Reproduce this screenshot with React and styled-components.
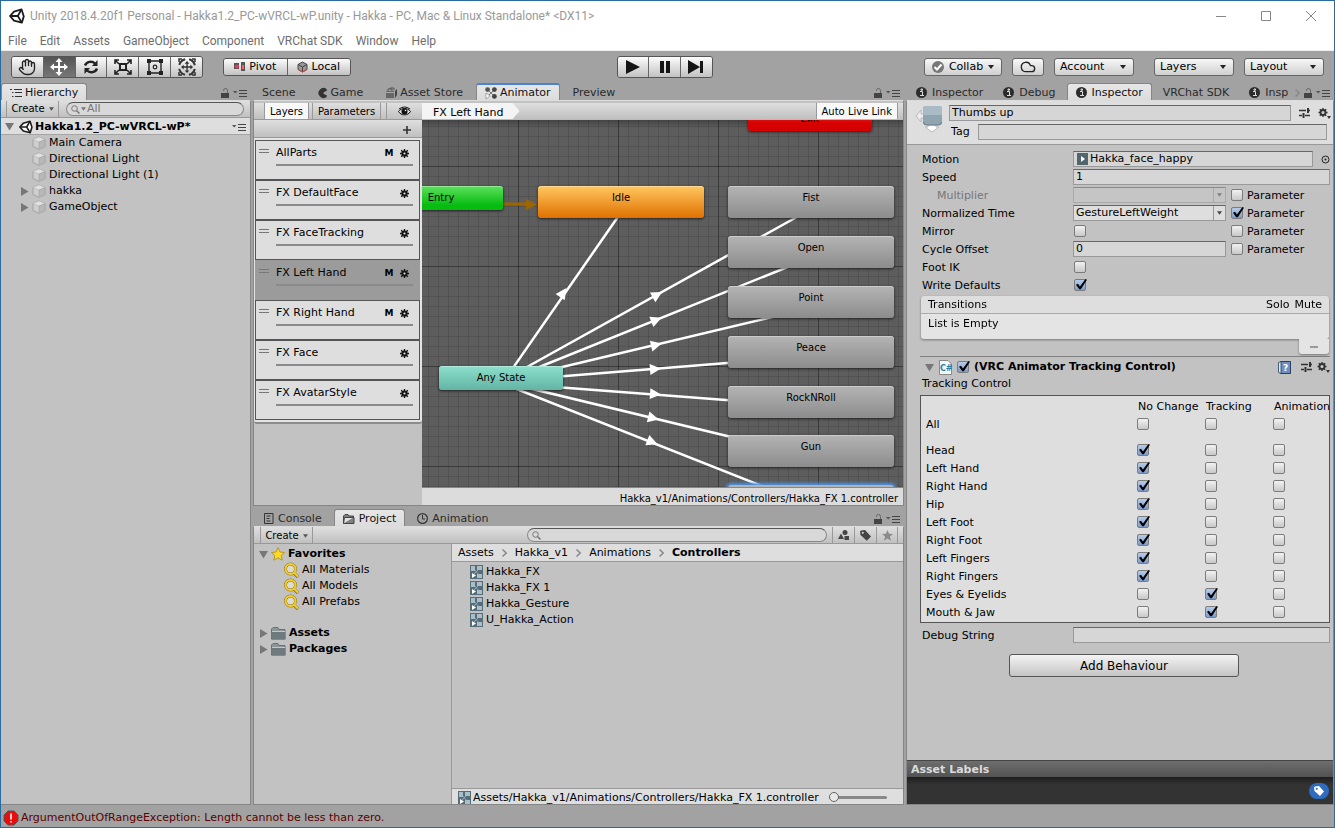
import React from "react";
import styled, { createGlobalStyle, css } from "styled-components";
import { Hand, Cloud } from "lucide-react";

const ui = '"DejaVu Sans", Verdana, sans-serif';
const win = 'Roboto, "Noto Sans", sans-serif';

const Global = createGlobalStyle`
  *, *::before, *::after { box-sizing: border-box; }
  html, body { margin: 0; background: #a2a2a2; }
  body { font: 11px/16px ${ui}; color: #000; }
  button, input, select { font: inherit; color: inherit; margin: 0; padding: 0; border: 0; background: none; border-radius: 0; outline: none; }
  a { color: inherit; text-decoration: none; }
  svg { display: block; flex: none; overflow: visible; }
`;

const bar = "linear-gradient(#dfdfdf, #c0c0c0)";

const Window = styled.div`
  display: flex;
  flex-direction: column;
  min-height: 100vh;
  border: 1px solid #2a6a9e;
  background: #a2a2a2;
  white-space: nowrap;
`;

/* ---------- window chrome ---------- */
const TitleBar = styled.header`
  display: flex;
  align-items: center;
  height: 30px;
  padding: 0 14px 0 8px;
  gap: 5px;
  background: #fff;
  color: #999;
  font: 12px/16px ${win};
`;
const Title = styled.span`flex: 1;`;
const WindowButtons = styled.div`display: flex; gap: 30px; margin-right: 2px;`;
const WindowButton = styled.button`width: 15px; height: 15px; display: grid; place-items: center;`;
const MenuBar = styled.nav`
  display: flex;
  gap: 13px;
  height: 20px;
  padding: 0 7px;
  background: #fff;
  color: #6d6d6d;
  font: 12px/20px ${win};
  border-bottom: 1px solid #eee;
`;
const MenuItem = styled.button``;

/* ---------- top toolbar ---------- */
const Toolbar = styled.div`
  display: grid;
  grid-template-columns: 1fr auto 1fr;
  align-items: center;
  height: 32px;
  padding: 0 10px;
`;
const ToolGroup = styled.div`
  display: flex;
  align-items: center;
  gap: ${(p) => p.$gap || 0}px;
  justify-content: ${(p) => (p.$end ? "flex-end" : "flex-start")};
`;
const Segments = styled.div`
  display: flex;
  width: ${(p) => p.$w}px;
  height: ${(p) => p.$h || 22}px;
  border: 1px solid #555;
  border-radius: 3px;
  overflow: hidden;
`;
const PlaySegments = styled(Segments)`margin-right: 6px;`;
const Segment = styled.button`
  display: flex;
  flex: 1;
  align-items: center;
  justify-content: center;
  gap: 3px;
  background: ${(p) => (p.$on ? "linear-gradient(#555, #777)" : "linear-gradient(#fcfcfc, #c2c2c2)")};
  & + & { border-left: 1px solid #666; }
`;
const pill = css`
  height: 18px;
  border: 1px solid #666;
  border-radius: 3px;
  background: linear-gradient(#f8f8f8, #cfcfcf);
`;
const PillButton = styled.button`
  ${pill}
  display: flex;
  align-items: center;
  justify-content: ${(p) => (p.$center ? "center" : "space-between")};
  width: ${(p) => p.$w}px;
  padding: 0 7px 0 ${(p) => p.$pl || 7}px;
  gap: 4px;
`;
const PillSelectBox = styled.label`
  ${pill}
  position: relative;
  display: flex;
  width: 80px;
  & > svg { position: absolute; right: 7px; top: 6px; pointer-events: none; }
`;
const PillSelect = styled.select`appearance: none; width: 100%; padding-left: 5px; cursor: pointer;`;
const Spacer = styled.span`width: ${(p) => p.$w ?? 10}px; flex: none;`;

/* ---------- docking ---------- */
const Docks = styled.main`display: flex; flex: 1; gap: 2px; min-height: 0;`;
const Dock = styled.section`
  display: flex;
  flex-direction: column;
  min-width: 0;
  min-height: 0;
  flex: ${(p) => p.$flex || "none"};
  width: ${(p) => (p.$w ? p.$w + "px" : "auto")};
`;
const Tabs = styled.div`
  display: flex;
  height: ${(p) => p.$h || 17}px;
  padding-top: ${(p) => (p.$h ? 3 : 0)}px;
  padding-left: ${(p) => p.$pl || 0}px;
  gap: ${(p) => p.$gap || 0}px;
`;
const Tab = styled.button`
  display: flex;
  align-items: center;
  gap: ${(p) => p.$gap || 3}px;
  flex: ${(p) => (p.$clip ? "0 1 auto" : "none")};
  padding: 1px ${(p) => (p.$clip ? 0 : 8)}px 0 8px;
  min-width: 0;
  overflow: hidden;
  color: #2a2a2a;
  border: 1px solid transparent;
  border-bottom: 0;
  border-radius: 3px 3px 0 0;
  ${(p) => p.$on && css`
    background: linear-gradient(#e6e6e6, #dcdcdc);
    border-color: #858585;
    color: #111;
  `}
  ${(p) => p.$focus && css`border-top: 2px solid #4a83d6;`}
`;
const TabTools = styled.div`
  display: flex;
  align-items: center;
  gap: 4px;
  margin-left: auto;
  padding: 3px 4px 0 4px;
`;
const Panel = styled.div`
  display: flex;
  flex-direction: column;
  flex: 1;
  min-height: 0;
  background: #c2c2c2;
  border: 1px solid #868686;
  border-top: 1px solid #dcdcdc;
  ${(p) => p.$flush && "border-left: 0;"}
`;
const PanelBar = styled.div`
  display: flex;
  align-items: stretch;
  height: 17px;
  background: ${bar};
  border-bottom: 1px solid ${(p) => p.$line || "#999"};
  font-size: 10px;
  line-height: 16px;
`;
const BarButton = styled.button`
  display: flex;
  align-items: center;
  justify-content: center;
  gap: 4px;
  padding: ${(p) => p.$pt || 0}px 5px 0;
  border: solid #999;
  border-width: 0 ${(p) => (p.$open ? 0 : 1)}px 0 1px;
  ${(p) => p.$w && css`width: ${p.$w}px;`}
  ${(p) => p.$on && css`background: #f8f8f8;`}
`;
const SearchBox = styled.label`
  display: flex;
  align-items: center;
  gap: 1px;
  width: ${(p) => p.$w}px;
  flex: ${(p) => (p.$grow ? 1 : "none")};
  height: 14px;
  margin: 1px 0;
  padding: 0 6px 0 4px;
  border: 1px solid #888;
  border-top-color: #555;
  border-radius: 7px;
  background: #d8d8d8;
  color: #777;
  font-size: 11px;
`;
const SearchInput = styled.input`flex: 1; min-width: 0; height: 12px; line-height: 12px; &::placeholder { color: #777; opacity: 1; }`;

/* ---------- trees ---------- */
const SceneRow = styled.div`
  display: flex;
  align-items: center;
  height: 17px;
  padding: 1px 4px 0;
  gap: 2px;
  background: #dedede;
  border-bottom: 1px solid #a5a5a5;
  font-weight: bold;
`;
const Grow = styled.span`flex: 1;`;
const Tree = styled.ul`list-style: none; margin: 0; padding: ${(p) => p.$pt || 0}px 0 0;`;
const TreeRow = styled.li`
  display: flex;
  align-items: center;
  height: 16px;
  gap: 3px;
  padding-left: ${(p) => p.$pl || 0}px;
  font-weight: ${(p) => (p.$bold ? "bold" : "normal")};
  margin-top: ${(p) => p.$mt || 0}px;
`;
const FoldSlot = styled.span`width: 10px; display: flex; justify-content: center;`;

/* ---------- animator ---------- */
const AnimatorBody = styled.div`display: flex; min-height: 0; padding-top: 2px;`;
const LayerColumn = styled.div`width: 168px; flex: none;`;
const LayerBar = styled.div`
  display: flex;
  align-items: center;
  justify-content: flex-end;
  height: 18px;
  padding: 2px 11px 0 0;
  background: ${bar};
  border-bottom: 1px solid #999;
`;
const LayerList = styled.ul`
  list-style: none;
  margin: 0;
  padding: 2px 2px 2px 1px;
  background: #e4e4e4;
  border-bottom: 2px solid #8c8c8c;
  border-radius: 0 0 3px 3px;
`;
const Layer = styled.li`
  display: grid;
  grid-template-columns: 17px 1fr 14px 17px;
  grid-template-rows: 22px 2px;
  align-items: center;
  justify-items: start;
  height: 40px;
  padding: 1px 6px 0 3px;
  background: ${(p) => (p.$on ? "#9b9b9b" : "#dedede")};
  border: 1px solid ${(p) => (p.$on ? "#9b9b9b" : "#555")};
  & > b, & > svg { justify-self: center; }
`;
const Grip = styled.i`width: 10px; height: 4px; margin-top: -4px; border: solid #777; border-width: 1px 0;`;
const Mask = styled.b`font-size: 9px;`;
const Weight = styled.i`grid-column: 2 / 5; justify-self: stretch; height: 2px; background: #8a8a8a;`;

const GraphColumn = styled.div`display: flex; flex-direction: column; flex: 1; min-width: 0;`;
const Crumb = styled.button`
  padding: 2px 16px 0 11px;
  margin-right: auto;
  font-size: 11px;
  background: #f4f4f4;
  clip-path: polygon(0 0, calc(100% - 7px) 0, 100% 50%, calc(100% - 7px) 100%, 0 100%);
`;
const Canvas = styled.div`
  position: relative;
  overflow: hidden;
  height: 367px;
  background:
    linear-gradient(#0004, #0000 8px),
    linear-gradient(90deg, #0000004d 1px, #0000 1px) 96px 0 / 100px 100%,
    linear-gradient(#0000004d 1px, #0000 1px) 0 46px / 100% 100px,
    linear-gradient(90deg, #0000001c 1px, #0000 1px) 6px 0 / 10px 100%,
    linear-gradient(#0000001c 1px, #0000 1px) 0 6px / 100% 10px,
    #5d5d5d;
`;
const Edges = styled.svg`position: absolute; left: 0; top: 0;`;
const fills = {
  gray: "linear-gradient(#b4b4b4, #8c8c8c)",
  green: "linear-gradient(#5ee05e, #06bc10 80%)",
  orange: "linear-gradient(#ffc860, #e07000)",
  teal: "linear-gradient(#8ce0cc, #62b4a4)",
  red: "linear-gradient(#f04040, #d60000 70%)",
};
const Node = styled.div`
  position: absolute;
  left: ${(p) => p.$x}px;
  top: ${(p) => p.$y}px;
  width: ${(p) => (p.$small ? 124 : 166)}px;
  height: ${(p) => (p.$small ? 24 : 32)}px;
  padding-top: 4px;
  border-radius: 3px;
  text-align: center;
  font-size: 10px;
  background: ${(p) => fills[p.$tone || "gray"]};
  box-shadow: ${(p) => (p.$selected ? "0 0 3px 2px #4a90e0" : "0 1px 3px #000a, inset 0 1px #fff5")};
`;
const GraphFooter = styled.div`
  height: 18px;
  padding-right: 5px;
  text-align: right;
  font-size: 10px;
  line-height: 21px;
  border-top: 1px solid #888;
  background: #dcdcdc;
`;

/* ---------- project ---------- */
const ProjectBody = styled.div`display: flex; flex: 1; min-height: 0;`;
const Folders = styled.div`width: 198px; border-right: 1px solid #999;`;
const Files = styled.div`display: flex; flex-direction: column; flex: 1; min-width: 0;`;
const Breadcrumbs = styled.nav`
  display: flex;
  align-items: center;
  gap: 8px;
  height: 18px;
  padding: 1px 0 0 6px;
  background: #dedede;
  border-bottom: 1px solid #999;
`;
const PathBar = styled.div`
  display: flex;
  align-items: center;
  gap: 2px;
  height: 16px;
  margin-top: auto;
  padding: 2px 16px 0 6px;
  background: #dedede;
  border-top: 1px solid #999;
  overflow: hidden;
`;
const PathText = styled.span`width: 357px; overflow: hidden; line-height: 14px;`;
const Zoom = styled.input`
  appearance: none;
  width: 58px;
  height: 10px;
  &::-webkit-slider-runnable-track { height: 3px; background: #888; border-radius: 2px; }
  &::-webkit-slider-thumb { appearance: none; width: 10px; height: 10px; margin-top: -4px; border: 1px solid #666; border-radius: 50%; background: #e8e8e8; }
`;

/* ---------- inspector ---------- */
const StateHeader = styled.div`
  display: flex;
  gap: 6px;
  height: 44px;
  padding: 4px 2px 0 8px;
  background: #dedede;
  border-bottom: 1px solid #999;
`;
const HeaderFields = styled.div`display: grid; flex: 1; align-content: start; gap: 3px;`;
const HeaderLine = styled.div`
  display: flex;
  align-items: center;
  height: 16px;
  gap: 8px;
  padding: ${(p) => (p.$tag ? "0 4px 0 2px" : 0)};
`;
const field = css`
  height: 16px;
  background: #d6d6d6;
  border: 1px solid #999;
  border-top-color: #666;
`;
const TextField = styled.input`
  ${field}
  flex: ${(p) => (p.$w ? "none" : 1)};
  width: ${(p) => (p.$w ? p.$w + "px" : "auto")};
  min-width: 0;
  padding: 0 2px;
`;
const ObjectBox = styled.span`
  ${field}
  display: flex;
  align-items: center;
  flex: 1;
  padding-left: 3px;
  gap: 2px;
`;
const ObjectInput = styled.input`flex: 1; min-width: 0; height: 14px;`;
const SelectBox = styled.span`
  ${field}
  display: flex;
  position: relative;
  width: 153px;
  opacity: ${(p) => (p.$off ? 0.6 : 1)};
  background: ${(p) => (p.$off ? "#c8c8c8" : "#dedede")};
  &::before { content: ""; position: absolute; right: 11px; top: 0; bottom: 0; border-left: 1px solid #999; }
  & > svg { position: absolute; right: 3px; top: 5px; pointer-events: none; }
`;
const FieldSelect = styled.select`appearance: none; width: 100%; height: 14px; line-height: 14px; padding-left: 2px;`;
const Check = styled.input`
  appearance: none;
  position: relative;
  display: block;
  width: 12px;
  height: 12px;
  flex: none;
  margin-left: ${(p) => (p.$ml || 0)}px;
  border: 1px solid #7c7c7c;
  border-radius: 2px;
  background: linear-gradient(#f2f2f2, #c8c8c8);
  &:checked { background: linear-gradient(#b6cbe8, #7c9ccc); }
  &:checked::after {
    content: "";
    position: absolute;
    left: 1px;
    top: -1px;
    width: 11px;
    height: 11px;
    background: #000;
    clip-path: polygon(0 52%, 18% 44%, 36% 68%, 86% 0, 100% 6%, 44% 94%, 30% 94%);
  }
`;
const Form = styled.div`
  display: flex;
  flex-direction: column;
  padding: ${(p) => p.$pt || 0}px 3px 0 15px;
`;
const FormRow = styled.div`
  display: grid;
  grid-template-columns: 151px 1fr;
  align-items: center;
  height: 18px;
`;
const FieldLabel = styled.label`
  padding: 2px 0 0 ${(p) => (p.$indent ? 15 : 0)}px;
  color: ${(p) => (p.$off ? "#777" : "inherit")};
`;
const Control = styled.div`display: flex; align-items: center; gap: 4px; min-width: 0;`;
const ParamLabel = styled.label`display: flex; align-items: center; gap: 4px; margin-left: auto; width: 99px;`;
const ParamText = styled.span`padding-top: 1px;`;
const ListBox = styled.div`margin: 2px 4px 0 14px; filter: drop-shadow(0 1px 1px #0006);`;
const ListHead = styled.div`
  display: flex;
  gap: 5px;
  height: 18px;
  padding: 1px 7px 0 7px;
  background: #dedede;
  border-bottom: 1px solid #aaa;
  border-radius: 3px 3px 0 0;
`;
const ListEmpty = styled.div`height: 25px; padding: 2px 7px; background: #e4e4e4; border-radius: 0 0 3px 3px;`;
const ListRemove = styled.button`
  display: grid;
  place-items: center;
  width: 30px;
  height: 15px;
  margin-left: auto;
  background: #e4e4e4;
  border-radius: 0 0 3px 3px;
`;
const ComponentHead = styled.div`
  display: flex;
  align-items: center;
  gap: 5px;
  height: 20px;
  margin: 2px 3px 0 13px;
  padding: 1px 0 0 5px;
  border-top: 1px solid #808080;
  font-weight: bold;
`;
const TrackingLabel = styled.div`padding-left: 15px; height: 19px; line-height: 15px;`;
const TrackingBox = styled.div`margin: 0 3px 3px 13px; padding: 1px 0; background: #dedede; border: 1px solid #555;`;
const TrackingTable = styled.table`
  width: 100%;
  table-layout: fixed;
  border-collapse: collapse;
  th, td { height: 18px; padding: 0 8px 0 0; font-weight: normal; text-align: left; overflow: hidden; }
  th { padding-top: 2px; }
  th:first-child { padding-left: 5px; }
  thead th { padding-left: 1px; }
  th:last-child { overflow: visible; }
  tbody tr:first-child > * { height: 26px; padding-bottom: 8px; }
`;
const Col = styled.col`width: ${(p) => p.$w}px;`;
const AddButton = styled.button`
  align-self: center;
  width: 230px;
  height: 23px;
  margin: 10px 4px 0 0;
  border: 1px solid #555;
  border-radius: 3px;
  background: linear-gradient(#f4f4f4, #c4c4c4);
  font-size: 12px;
`;
const AssetHead = styled.div`
  margin-top: auto;
  height: 17px;
  padding: 1px 0 0 4px;
  background: linear-gradient(#6e6e6e, #525252);
  border-top: 1px solid #444;
  color: #dcdcdc;
  font-weight: bold;
`;
const AssetBody = styled.div`
  display: flex;
  align-items: center;
  justify-content: flex-end;
  height: 27px;
  padding-right: 4px;
  background: linear-gradient(#1e1e1e, #333 8px);
`;
const Status = styled.footer`
  display: flex;
  align-items: center;
  gap: 2px;
  height: 22px;
  padding: 4px 2px 0;
  color: #5c0000;
`;

/* ---------- icons ---------- */
const Svg = ({ w = 12, h, vb, children, ...r }) => (
  <svg width={w} height={h || w} viewBox={vb || `0 0 ${w} ${h || w}`} fill="none" aria-hidden="true" {...r}>{children}</svg>
);
const UnityLogo = ({ s = 15 }) => (
  <Svg w={s} vb="0 0 16 16" stroke="#1c1c1c" strokeWidth="1.800" strokeLinejoin="round">
    <path d="M1 8 5 3.600 12.600 1.400 14.800 8.400 12.800 14.600 5 12.600Z" fill="#fff" />
    <path d="M1 8H8.800M8.800 8 12.400 1.600M8.800 8 12.600 14.400" />
  </Svg>
);
const MoveIcon = ({ s = 18, c = "#fff" }) => (
  <Svg w={s} vb="0 0 18 18" fill={c}>
    <path d="M9 0 12.500 4H10v4h4V5.500L18 9 14 12.500V10H10v4h2.500L9 18 5.500 14H8V10H4v2.500L0 9 4 5.500V8H8V4H5.500Z" />
  </Svg>
);
const RotateIcon = () => (
  <Svg w={16} stroke="#222" strokeWidth="2.400">
    <path d="M2 6.500C3.500 2.500 9 1.500 12 4.500M14 9.500C12.500 13.500 7 14.500 4 11.500" />
    <path d="M14.500 1v6H9ZM1.500 15V9H7Z" fill="#222" stroke="none" />
  </Svg>
);
const ScaleIcon = () => (
  <Svg w={18} h={16} stroke="#222" strokeWidth="1.600">
    <path d="M6 5h6v6H6Z" strokeWidth="2" />
    <path d="M1 5V1h4M13 1h4v4M17 11v4h-4M5 15H1v-4M1 1l4 4M17 1l-4 4M17 15l-4-4M1 15l4-4" />
  </Svg>
);
const RectIcon = () => (
  <Svg w={18} h={16} stroke="#222">
    <path d="M3 2h12v12H3Z" strokeWidth="1.400" />
    <circle cx="9" cy="8" r="1.800" strokeWidth="1.200" />
    <path d="M1 0h4v4H1ZM13 0h4v4h-4ZM1 12h4v4H1ZM13 12h4v4h-4Z" fill="#222" stroke="none" />
  </Svg>
);
const TransformIcon = () => (
  <Svg w={18} stroke="#333" strokeWidth="2">
    <circle cx="9" cy="9" r="8" strokeDasharray="8.500 4.066" strokeDashoffset="-2" />
    <path d="M1 4V1h3M14 1h3v3M17 14v3h-3M4 17H1v-3" strokeWidth="1.500" />
    <g transform="translate(3 3) scale(.67)"><path stroke="none" fill="#333" d="M9 0 12.500 4H10v4h4V5.500L18 9 14 12.500V10H10v4h2.500L9 18 5.500 14H8V10H4v2.500L0 9 4 5.500V8H8V4H5.500Z" /></g>
  </Svg>
);
const PivotIcon = () => (
  <Svg w={12} h={10}>
    <rect x="0" y="1" width="5" height="6" fill="#555" /><circle cx="3" cy="4.500" r="2" fill="#e0405a" />
    <rect x="7" y="0" width="4" height="9" fill="#555" /><rect x="8" y="3" width="2" height="4" fill="#e66" />
  </Svg>
);
const LocalIcon = () => (
  <Svg w={11} h={12} stroke="#444">
    <path d="M1 3.500 5.500 1 10 3.500V8.500L5.500 11 1 8.500Z" fill="#999" /><path d="M1 3.500 5.500 6 10 3.500M5.500 6v5" /><path d="M1 8.500 5.500 11 10 8.500" stroke="#d44" />
  </Svg>
);
const PlayIcon = () => <Svg w={14} h={14} fill="#151515"><path d="M0 0 14 7 0 14Z" /></Svg>;
const PauseIcon = () => <Svg w={10} h={12} fill="#151515"><path d="M0 0h4v12H0ZM6 0h4v12H6Z" /></Svg>;
const StepIcon = () => <Svg w={16} h={14} fill="#151515"><path d="M0 0 12 7 0 14ZM12 1h3v12h-3Z" /></Svg>;
const CollabIcon = () => (
  <Svg w={12}><circle cx="6" cy="6" r="6" fill="#777" /><path d="M2.500 6 5 8.500 9.500 3.500" stroke="#fff" strokeWidth="2" /></Svg>
);
const Down = ({ c = "#222", w = 6 }) => <Svg w={w} h={4} vb="0 0 6 4" fill={c}><path d="M0 0h6L3 4Z" /></Svg>;
const Info = () => (
  <Svg w={11}><circle cx="5.500" cy="5.500" r="5.500" fill="#2c2c2c" /><path d="M4 4.500h2.500v4M4 8.500h4M5 2h1.500v1.200H5Z" stroke="#ddd" strokeWidth="1" /></Svg>
);
const Lock = () => (
  <Svg w={8} h={10}><rect y="5" width="8" height="5" fill="#444" /><path d="M2.500 3V2.500a2 2 0 0 1 4 0V5" stroke="#666" /></Svg>
);
const PaneMenu = () => <Svg w={14} h={8}><path d="M0 2h4.500L2.200 4.500Z" fill="#555" /><path d="M6 1.500h8M6 4.500h8M6 7.500h8" stroke="#444" /></Svg>;
const ListIcon = () => (
  <Svg w={12} h={10} stroke="#333"><path d="M4 1.500h8M5 4.500h7M5 8.500h7" strokeWidth="1.200" /><path d="M0 1.500h2M2 4.500h1.500M2 8.500h1.500" /></Svg>
);
const GameIcon = () => <Svg w={10} fill="#333"><path d="M8.500 1A5 5 0 1 0 8.500 9L9 7.500 5.500 5.800V4.500L9 2.500Z" /></Svg>;
const StoreIcon = () => (
  <Svg w={12} h={11}><path d="M1 4h8v7H1Z" fill="#666" /><path d="M10 4l2-2v6l-2 3Z" fill="#444" /><path d="M3 4V2h4v2M5 2V1h4v2" stroke="#555" /><path d="M1 5.500h8" stroke="#aaa" /></Svg>
);
const AnimatorIcon = () => (
  <Svg w={12}>
    <path d="M3 3l6 6M9 3 3 9" stroke="#777" /><circle cx="2.600" cy="2.600" r="2.400" fill="#555" /><circle cx="9.400" cy="2.600" r="2.400" fill="#444" /><circle cx="9.400" cy="9.400" r="2.400" fill="#444" />
    <path d="M1 6v6l4-3Z" fill="#fff" stroke="#777" strokeWidth=".6" />
  </Svg>
);
const Eye = () => (
  <Svg w={13} h={9}><path d="M.5 4.500C3 .5 10 .5 12.500 4.500 10 9 3 9 .5 4.500Z" stroke="#111" fill="#ddd" /><circle cx="6.500" cy="4.500" r="3" fill="#111" /><circle cx="7.500" cy="3.500" r=".8" fill="#fff" /><path d="M1 2Q6.500-2 12 2" stroke="#111" /></Svg>
);
const Plus = () => <Svg w={8} stroke="#333" strokeWidth="1.600"><path d="M4 0v8M0 4h8" /></Svg>;
const Gear = ({ s = 9, c = "#151515" }) => (
  <Svg w={s} vb="0 0 9 9" stroke={c}>
    <path d="M4.500 0v9M0 4.500h9M1.200 1.200l6.600 6.600M7.800 1.200 1.200 7.800" strokeWidth="1.400" />
    <circle cx="4.500" cy="4.500" r="2.100" strokeWidth="2" fill="#dedede" />
  </Svg>
);
const GearMenu = () => (
  <Svg w={13} h={11} stroke="#333">
    <path d="M5 0v9M.5 4.500h9M1.800 1.300l6.400 6.400M8.200 1.300 1.800 7.700" strokeWidth="1.400" />
    <circle cx="5" cy="4.500" r="2.500" strokeWidth="1.900" fill="#d0d0d0" />
    <path d="M9 8h4l-2 3Z" fill="#333" stroke="none" />
  </Svg>
);
const Sliders = () => <Svg w={11} h={10} stroke="#333" strokeWidth="1.500"><path d="M0 2.500h7M10 2.500h1M0 7.500h3M6 7.500h5" /><path d="M9 0v5M4.500 5v5" strokeWidth="2" /></Svg>;
const CubeIcon = () => (
  <Svg w={14} h={14} stroke="#999" strokeWidth=".8" strokeLinejoin="round"><path d="M1 3.500 7 .8 13 3.500V10.500L7 13.400 1 10.500Z" fill="#cfcfcf" /><path d="M1 3.500 7 6.200 13 3.500 7 .8Z" fill="#e0e0e0" stroke="#bbb" /><path d="M7 6.200V13.400L13 10.500V3.500Z" fill="#b8b8b8" stroke="#aaa" /></Svg>
);
const Fold = ({ open }) => (
  <Svg w={9} h={9} fill="#777">{open ? <path d="M0 1h9L4.500 8.500Z" /> : <path d="M1 0v9l7.500-4.500Z" />}</Svg>
);
const Lens = () => <Svg w={9} stroke="#777"><circle cx="3.500" cy="3.500" r="2.800" /><path d="M5.500 5.500 8.500 8.500" strokeWidth="1.500" /></Svg>;
const ConsoleIcon = () => <Svg w={10} h={11} stroke="#333"><path d="M.5.500h8.500v10H.5ZM2.500 3h4M2.500 5.500h3M2.500 8h4" /></Svg>;
const ProjectIcon = () => <Svg w={12} h={10}><path d="M.5 9.500V2L2 .5h3L6 2h4.500v1.500M.5 9.500h10.500V3.500H1.500Z" fill="#808080" stroke="#444" /></Svg>;
const Clock = () => <Svg w={11} stroke="#333"><circle cx="5.500" cy="5.500" r="4.900" strokeWidth="1.200" /><path d="M5.500 2v4H8" /></Svg>;
const StarIcon = () => (
  <Svg w={14} h={14} vb="0 0 14 14"><path d="M7 .6 9 5l4.500.5L10.200 8.500 11.200 13.200 7 10.800 2.800 13.200 3.800 8.500.5 5.500 5 5Z" fill="#ffd92a" stroke="#a98b14" strokeWidth=".8" /></Svg>
);
const SearchFav = () => (
  <Svg w={15} h={15}><circle cx="6.500" cy="6" r="5" stroke="#8a7a30" strokeWidth="3" fill="#dcdcd4" /><path d="M10 10l4 4" stroke="#8a7a30" strokeWidth="3.400" /><circle cx="6.500" cy="6" r="5" stroke="#f5cf28" strokeWidth="2" /><path d="M10 9.500l4 4" stroke="#f5cf28" strokeWidth="2.200" /></Svg>
);
const Folder = () => (
  <Svg w={15} h={13}><path d="M.5 12V2L2 .5h5L8 2.500h6V12Z" fill="#8c9698" stroke="#697274" /><path d="M.5 5H14.500V12.500H.5Z" fill="#6e7a7d" /><path d="M1 4.500h13" stroke="#c0c8ca" /></Svg>
);
const ControllerIcon = () => (
  <Svg w={13} h={14}><rect width="13" height="14" fill="#566d78" /><path d="M4 4l5 6M9 4 4 9" stroke="#90a6b0" /><path d="M1 1h4v5H1ZM7 1h5v4H7ZM7 9h5v4H7Z" fill="#a9bec8" /><path d="M2 8v5l4-2.500Z" fill="#fff" /></Svg>
);
const Chevron = () => <Svg w={5} h={8} stroke="#888" strokeWidth="1.500"><path d="M.5.500 4.200 4 .5 7.500" /></Svg>;
const Shapes = () => <Svg w={11} h={10} fill="#444"><path d="M0 9 3 3.500 6 9Z" /><circle cx="7" cy="2.500" r="2.500" /><path d="M6.500 6H11v4H6.500Z" /></Svg>;
const TagIcon = ({ c = "#444" }) => <Svg w={11} fill={c}><path fillRule="evenodd" d="M0 1.500 1 .5 5 0l6 6.500L6.800 10.800.5 5ZM2.800 1.800a1 1 0 1 0 .01 0Z" /></Svg>;
const StarGray = () => <Svg w={11} fill="#8a8a8a"><path d="M5.500 0 7 3.800l4 .2-3.100 2.600L9 10.800 5.500 8.500 2 10.800 3.100 6.600 0 4l4-.2Z" /></Svg>;
const StateIcon = () => (
  <Svg w={28} h={28}>
    <path d="M6 5v4h3v4H6v4L1 11Z" stroke="#bbb" fill="#eee" /><path d="M13 20h8v2h3l-7 5-7-5h3Z" fill="#fff" stroke="#bbb" />
    <rect x="8" y="1" width="19" height="19" rx="3" fill="#8fa5b0" /><path d="M8 4a3 3 0 0 1 3-3h13a3 3 0 0 1 3 3v6H8Z" fill="#a9bcc6" /><path d="M8.500 17a3 3 0 0 0 3 3h12a3 3 0 0 0 3-3" stroke="#657b86" />
  </Svg>
);
const ClipIcon = () => <Svg w={11} h={12}><rect width="11" height="12" fill="#51656e" /><path d="M4 3v6l4-3Z" fill="#fff" /></Svg>;
const Picker = () => <Svg w={9}><circle cx="4.500" cy="4.500" r="3.500" stroke="#222" /><circle cx="4.500" cy="4.500" r="1" fill="#222" /></Svg>;
const Minus = () => <Svg w={8} h={2} fill="#999"><path d="M0 0h8v2H0Z" /></Svg>;
const ScriptIcon = () => (
  <Svg w={13} h={15}><path d="M.5.500H9L12.500 4v10.500H.5Z" fill="#f4f6f8" stroke="#888" /><text x="1" y="11" fontSize="8" fontWeight="bold" fill="#1683ad">C#</text></Svg>
);
const HelpBook = () => (
  <Svg w={13} h={13}><path d="M2.500.500h10v12h-10Z" fill="#6f8fc0" stroke="#263e63" /><path d="M.5 1.500 3 .5v12l-2.500-1Z" fill="#dfe6ee" stroke="#263e63" strokeWidth=".8" /><text x="5" y="10" fontSize="9" fill="#fff">?</text></Svg>
);
const LabelBadge = () => (
  <Svg w={20} h={16}><rect width="20" height="16" rx="8" fill="#2f6bc0" /><g transform="translate(5 3)"><path fillRule="evenodd" fill="#fff" d="M0 1.500 1 .5 5 0l5 5.500L6 10 .5 5ZM2.800 1.800a1 1 0 1 0 .01 0Z" /></g></Svg>
);
const ErrorIcon = () => (
  <Svg w={16}><path d="M5 1h6l4 4v6l-4 4H5L1 11V5Z" fill="#e80c0c" stroke="#555" /><path d="M7.200 3.500h1.600v6H7.200ZM7.200 11h1.600v1.600H7.200Z" fill="#fff" /></Svg>
);

/* ---------- data ---------- */
const menus = ["File", "Edit", "Assets", "GameObject", "Component", "VRChat SDK", "Window", "Help"];
const tools = [
  ["Hand", <Hand size={18} strokeWidth={1.800} color="#222" />], ["Move", <MoveIcon />], ["Rotate", <RotateIcon />],
  ["Scale", <ScaleIcon />], ["Rect", <RectIcon />], ["Transform", <TransformIcon />],
];
const objects = [["Main Camera"], ["Directional Light"], ["Directional Light (1)"], ["hakka", true], ["GameObject", true]];
const layers = [
  ["AllParts", true], ["FX DefaultFace"], ["FX FaceTracking"], ["FX Left Hand", true], ["FX Right Hand", true], ["FX Face"], ["FX AvatarStyle"],
];
const states = [["Fist", 66], ["Open", 116], ["Point", 166], ["Peace", 216], ["RockNRoll", 266], ["Gun", 315]];
/* each edge: start, end, arrow position */
const edges = [
  [84, 258, 200, 91, 141, 173], [87, 257, 391, 88, 235, 175], [90, 258, 383, 140, 234, 200], [94, 258, 376, 191, 234, 225],
  [94, 260, 330, 241, 233, 249], [94, 264, 330, 282, 233, 274], [73, 260, 330, 322, 231, 298], [72, 260, 350, 370, 230, 322],
];
const body = [
  ["All"], ["Head", 0], ["Left Hand", 0], ["Right Hand", 0], ["Hip", 0], ["Left Foot", 0], ["Right Foot", 0],
  ["Left Fingers", 0], ["Right Fingers", 0], ["Eyes & Eyelids", 1], ["Mouth & Jaw", 1],
];
const modes = ["No Change", "Tracking", "Animation"];

const Param = ({ name, on }) => (
  <ParamLabel><Check type="checkbox" defaultChecked={on} aria-label={`${name} parameter`} /><ParamText>Parameter</ParamText></ParamLabel>
);
const PaneTools = () => <TabTools><Lock /><PaneMenu /></TabTools>;

function Hierarchy() {
  return (
    <Dock $w={250}>
      <Tabs><Tab $on><ListIcon />Hierarchy</Tab><PaneTools /></Tabs>
      <Panel $flush>
        <PanelBar>
          <Spacer $w={5} />
          <BarButton $w={53}>Create <Down c="#555" w={5} /></BarButton>
          <Spacer $w={7} />
          <SearchBox $grow><Lens /><Down c="#777" w={5} /><SearchInput placeholder="All" aria-label="Search hierarchy" /></SearchBox>
          <Spacer $w={6} />
        </PanelBar>
        <SceneRow><Fold open /><Spacer $w={1} /><UnityLogo s={14} />Hakka1.2_PC-wVRCL-wP*<Grow /><PaneMenu /></SceneRow>
        <Tree>
          {objects.map(([n, kids]) => (
            <TreeRow key={n} $pl={18}><FoldSlot>{kids && <Fold />}</FoldSlot><CubeIcon />{n}</TreeRow>
          ))}
        </Tree>
      </Panel>
    </Dock>
  );
}

function Graph() {
  return (
    <Canvas>
      <Edges width="100%" height="100%">
        <path d="M81 84H106" stroke="#9c6500" strokeWidth="3" /><path d="M104 79v11l11-5.500Z" fill="#9c6500" />
        {edges.map(([x1, y1, x2, y2, ax, ay]) => (
          <g key={y2}>
            <path d={`M${x1} ${y1}L${x2} ${y2}`} stroke="#fff" strokeWidth="2.500" />
            <path d="M-5-5.500 6 0-5 5.500Z" fill="#fff" transform={`translate(${ax} ${ay}) rotate(${(Math.atan2(y2 - y1, x2 - x1) * 180) / Math.PI})`} />
          </g>
        ))}
      </Edges>
      <Node $small $tone="red" $x={326} $y={-13}>Exit</Node>
      <Node $small $tone="green" $x={-43} $y={66}>Entry</Node>
      <Node $tone="orange" $x={116} $y={66}>Idle</Node>
      <Node $small $tone="teal" $x={17} $y={246}>Any State</Node>
      {states.map(([n, y]) => <Node key={n} $x={306} $y={y}>{n}</Node>)}
      <Node $selected $x={306} $y={365} />
    </Canvas>
  );
}

function Animator() {
  return (
    <Dock>
      <Tabs $gap={4}>
        <Tab>Scene</Tab><Tab><GameIcon />Game</Tab><Tab><StoreIcon />Asset Store</Tab>
        <Tab $on $focus><AnimatorIcon />Animator</Tab><Tab>Preview</Tab><PaneTools />
      </Tabs>
      <Panel>
        <AnimatorBody>
          <LayerColumn>
            <PanelBar>
              <Spacer /><BarButton $on $pt={2} $w={45}>Layers</BarButton><Spacer $w={3} />
              <BarButton $pt={2} $w={69}>Parameters</BarButton>
              <Grow /><BarButton $open aria-label="Show layers" $w={36}><Eye /></BarButton>
            </PanelBar>
            <LayerBar><button aria-label="Add layer"><Plus /></button></LayerBar>
            <LayerList>
              {layers.map(([n, m]) => (
                <Layer key={n} $on={n === "FX Left Hand"}>
                  <Grip /><span>{n}</span><Mask>{m ? "M" : ""}</Mask><Gear /><span /><Weight />
                </Layer>
              ))}
            </LayerList>
          </LayerColumn>
          <GraphColumn>
            <PanelBar $line="#bbb"><Crumb>FX Left Hand</Crumb><BarButton $on $pt={2}>Auto Live Link</BarButton><Spacer $w={5} /></PanelBar>
            <Graph />
            <GraphFooter>Hakka_v1/Animations/Controllers/Hakka_FX 1.controller</GraphFooter>
          </GraphColumn>
        </AnimatorBody>
      </Panel>
    </Dock>
  );
}

function Project() {
  return (
    <Dock $flex="1">
      <Tabs $h={20} $gap={3} $pl={2}>
        <Tab $gap={4}><ConsoleIcon />Console</Tab><Tab $on $gap={4}><ProjectIcon />Project</Tab><Tab $gap={4}><Clock />Animation</Tab><PaneTools />
      </Tabs>
      <Panel>
        <PanelBar>
          <Spacer $w={6} /><BarButton $pt={1} $w={53}>Create <Down c="#555" w={5} /></BarButton><Grow />
          <SearchBox $w={300}><Lens /><SearchInput aria-label="Search project" /></SearchBox>
          <Spacer $w={5} />
          <BarButton $w={22} $open aria-label="Search by type"><Shapes /></BarButton>
          <BarButton $w={22} $open aria-label="Search by label"><TagIcon /></BarButton>
          <BarButton $w={22} aria-label="Save search"><StarGray /></BarButton>
          <Spacer $w={5} />
        </PanelBar>
        <ProjectBody>
          <Folders>
            <Tree $pt={2}>
              <TreeRow $bold $pl={4}><FoldSlot><Fold open /></FoldSlot><StarIcon />Favorites</TreeRow>
              {["All Materials", "All Models", "All Prefabs"].map((n) => <TreeRow key={n} $pl={30}><SearchFav />{n}</TreeRow>)}
              <TreeRow $bold $pl={4} $mt={15}><FoldSlot><Fold /></FoldSlot><Folder />Assets</TreeRow>
              <TreeRow $bold $pl={4}><FoldSlot><Fold /></FoldSlot><Folder />Packages</TreeRow>
            </Tree>
          </Folders>
          <Files>
            <Breadcrumbs>
              <a href="#assets">Assets</a><Chevron /><a href="#hakka">Hakka_v1</a><Chevron /><a href="#animations">Animations</a><Chevron /><b>Controllers</b>
            </Breadcrumbs>
            <Tree $pt={2}>
              {["Hakka_FX", "Hakka_FX 1", "Hakka_Gesture", "U_Hakka_Action"].map((n) => <TreeRow key={n} $pl={18}><ControllerIcon />{n}</TreeRow>)}
            </Tree>
            <PathBar>
              <ControllerIcon /><PathText>Assets/Hakka_v1/Animations/Controllers/Hakka_FX 1.controller</PathText>
              <Zoom type="range" defaultValue={0} aria-label="Icon size" />
            </PathBar>
          </Files>
        </ProjectBody>
      </Panel>
    </Dock>
  );
}

function Inspector() {
  return (
    <Dock $w={428}>
      <Tabs $gap={2} $pl={1}>
        <Tab $gap={5}><Info />Inspector</Tab><Tab $gap={5}><Info />Debug</Tab><Tab $on $gap={5}><Info />Inspector</Tab><Tab>VRChat SDK</Tab>
        <Tab $clip $gap={5}><Info />Insp</Tab><TabTools><Chevron /><Lock /><PaneMenu /></TabTools>
      </Tabs>
      <Panel>
        <StateHeader>
          <StateIcon />
          <HeaderFields>
            <HeaderLine><TextField defaultValue="Thumbs up" aria-label="State name" /><Sliders /><GearMenu /></HeaderLine>
            <HeaderLine $tag><label htmlFor="tag">Tag</label><TextField id="tag" /></HeaderLine>
          </HeaderFields>
        </StateHeader>
        <Form $pt={5}>
          <FormRow><FieldLabel htmlFor="motion">Motion</FieldLabel>
            <Control><ObjectBox><ClipIcon /><ObjectInput id="motion" defaultValue="Hakka_face_happy" /></ObjectBox><Spacer $w={0} /><button aria-label="Pick motion"><Picker /></button></Control></FormRow>
          <FormRow><FieldLabel htmlFor="speed">Speed</FieldLabel><Control><TextField id="speed" defaultValue="1" /></Control></FormRow>
          <FormRow><FieldLabel $indent $off htmlFor="mult">Multiplier</FieldLabel>
            <Control><SelectBox $off><FieldSelect id="mult" disabled /><Down w={5} c="#555" /></SelectBox><Param name="Multiplier" /></Control></FormRow>
          <FormRow><FieldLabel htmlFor="time">Normalized Time</FieldLabel>
            <Control><SelectBox><FieldSelect id="time"><option>GestureLeftWeight</option></FieldSelect><Down w={5} c="#444" /></SelectBox><Param name="Normalized Time" on /></Control></FormRow>
          <FormRow><FieldLabel htmlFor="mirror">Mirror</FieldLabel><Control><Check $ml={1} type="checkbox" id="mirror" /><Param name="Mirror" /></Control></FormRow>
          <FormRow><FieldLabel htmlFor="cycle">Cycle Offset</FieldLabel><Control><TextField $w={153} id="cycle" defaultValue="0" /><Param name="Cycle Offset" /></Control></FormRow>
          <FormRow><FieldLabel htmlFor="ik">Foot IK</FieldLabel><Control><Check $ml={1} type="checkbox" id="ik" /></Control></FormRow>
          <FormRow><FieldLabel htmlFor="wd">Write Defaults</FieldLabel><Control><Check $ml={1} type="checkbox" id="wd" defaultChecked /></Control></FormRow>
        </Form>
        <ListBox>
          <ListHead>Transitions<Grow /><span>Solo</span><span>Mute</span></ListHead>
          <ListEmpty>List is Empty</ListEmpty>
          <ListRemove aria-label="Remove transition"><Minus /></ListRemove>
        </ListBox>
        <ComponentHead>
          <Fold open /><ScriptIcon /><Check type="checkbox" defaultChecked aria-label="Enable component" /><span>(VRC Animator Tracking Control)</span>
          <Grow /><HelpBook /><Spacer $w={0} /><Sliders /><GearMenu />
        </ComponentHead>
        <TrackingLabel>Tracking Control</TrackingLabel>
        <TrackingBox>
          <TrackingTable>
            <colgroup><col /><Col $w={68} /><Col $w={68} /><Col $w={56} /></colgroup>
            <thead><tr><th aria-label="Part" />{modes.map((m) => <th key={m} scope="col">{m}</th>)}</tr></thead>
            <tbody>
              {body.map(([n, on]) => (
                <tr key={n}>
                  <th scope="row">{n}</th>
                  {modes.map((m, i) => <td key={m}><Check type="checkbox" defaultChecked={on === i} aria-label={`${n}: ${m}`} /></td>)}
                </tr>
              ))}
            </tbody>
          </TrackingTable>
        </TrackingBox>
        <Form>
          <FormRow><FieldLabel htmlFor="debug">Debug String</FieldLabel><Control><TextField id="debug" /></Control></FormRow>
          <AddButton>Add Behaviour</AddButton>
        </Form>
        <AssetHead>Asset Labels</AssetHead>
        <AssetBody><button aria-label="Edit labels"><LabelBadge /></button></AssetBody>
      </Panel>
    </Dock>
  );
}

export default function App() {
  return (
    <Window>
      <Global />
      <TitleBar>
        <UnityLogo s={16} />
        <Title>Unity 2018.4.20f1 Personal - Hakka1.2_PC-wVRCL-wP.unity - Hakka - PC, Mac &amp; Linux Standalone* &lt;DX11&gt;</Title>
        <WindowButtons>
          <WindowButton aria-label="Minimize"><Svg w={10} stroke="#888"><path d="M0 5.500h10" /></Svg></WindowButton>
          <WindowButton aria-label="Maximize"><Svg w={10} stroke="#888"><path d="M.5.500h9v9h-9Z" /></Svg></WindowButton>
          <WindowButton aria-label="Close"><Svg w={10} stroke="#888"><path d="M0 0 10 10M10 0 0 10" /></Svg></WindowButton>
        </WindowButtons>
      </TitleBar>
      <MenuBar>{menus.map((m) => <MenuItem key={m}>{m}</MenuItem>)}</MenuBar>
      <Toolbar>
        <ToolGroup $gap={20}>
          <Segments $w={192}>{tools.map(([n, icon]) => <Segment key={n} $on={n === "Move"} aria-label={n}>{icon}</Segment>)}</Segments>
          <Segments $h={18} $w={128}><Segment><PivotIcon />Pivot</Segment><Segment><LocalIcon />Local</Segment></Segments>
        </ToolGroup>
        <PlaySegments $w={96}>
          <Segment aria-label="Play"><PlayIcon /></Segment><Segment aria-label="Pause"><PauseIcon /></Segment><Segment aria-label="Step"><StepIcon /></Segment>
        </PlaySegments>
        <ToolGroup $end $gap={10}>
          <PillButton $w={78}><CollabIcon />Collab <Down /></PillButton>
          <PillButton $w={32} $center aria-label="Cloud services"><Cloud size={16} color="#222" strokeWidth={2} /></PillButton>
          <PillButton $w={80} $pl={5}>Account <Down /></PillButton>
          <Spacer $w={0} />
          <PillSelectBox><PillSelect aria-label="Layers"><option>Layers</option></PillSelect><Down /></PillSelectBox>
          <PillSelectBox><PillSelect aria-label="Layout"><option>Layout</option></PillSelect><Down /></PillSelectBox>
        </ToolGroup>
      </Toolbar>
      <Docks>
        <Hierarchy />
        <Dock $flex="1"><Animator /><Project /></Dock>
        <Inspector />
      </Docks>
      <Status><ErrorIcon />ArgumentOutOfRangeException: Length cannot be less than zero.</Status>
    </Window>
  );
}
